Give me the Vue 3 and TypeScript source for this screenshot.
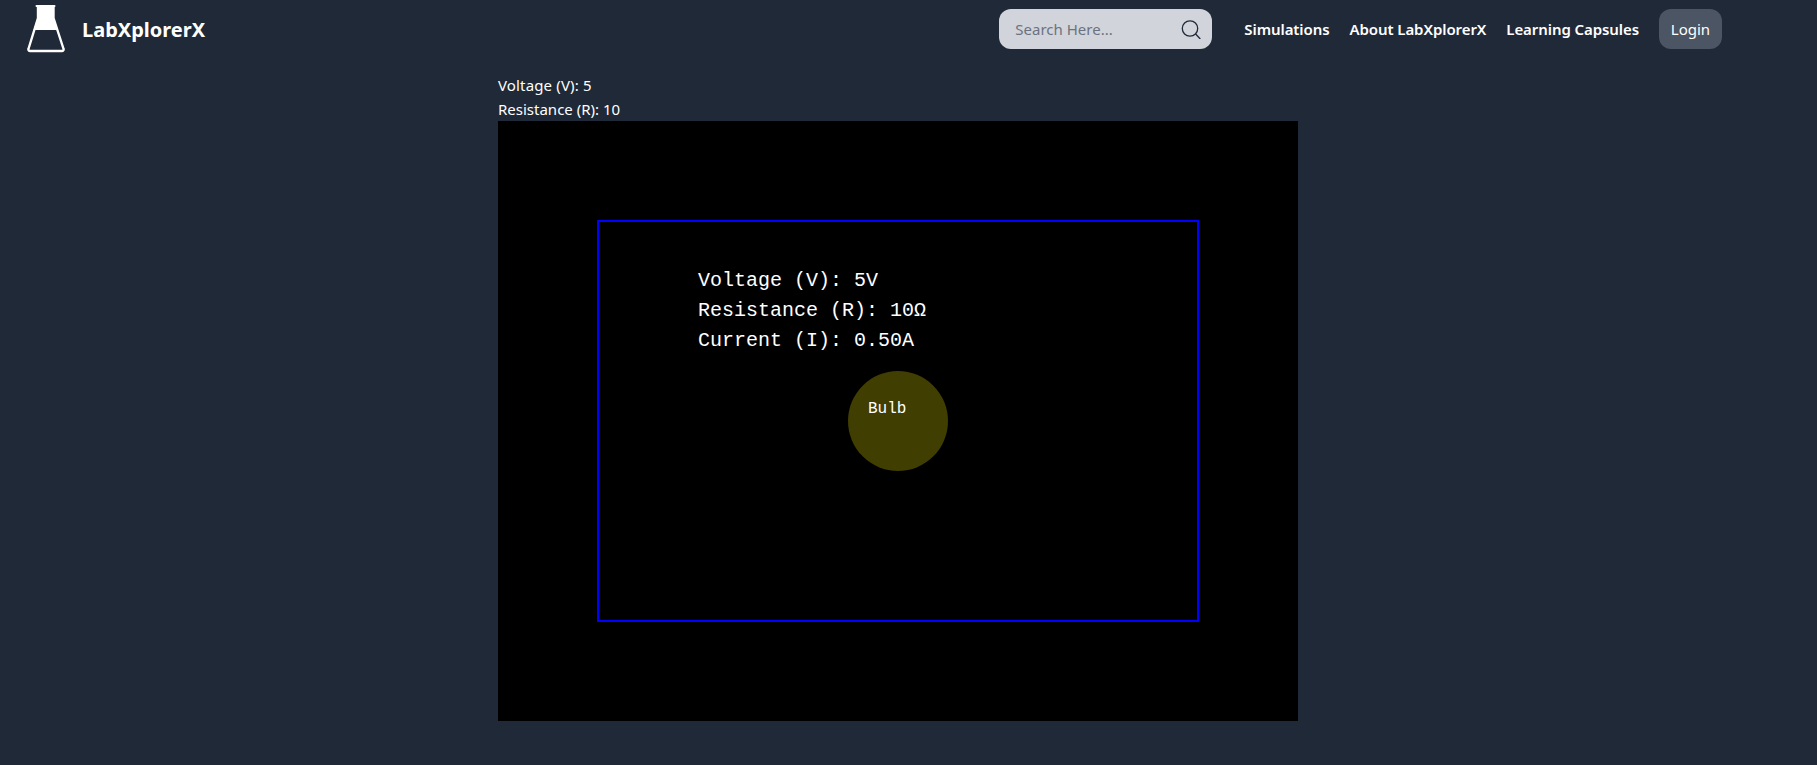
<script setup lang="ts">
const links = ["Simulations", "About LabXplorerX", "Learning Capsules"];
const voltage = 5;
const resistance = 10;
const current = (voltage / resistance).toFixed(2);
</script>

<template>
  <div class="page">
    <header class="navbar">
      <div class="brand">
        <svg class="flask" width="38" height="48" viewBox="0 0 38 48" fill="none">
          <path d="M9.5 1H27.5" stroke="#fff" stroke-width="2" stroke-linecap="round" />
          <path d="M11 1H26.5V13L31 25H6.5L11 13Z" fill="#fff" />
          <path
            d="M11 1V13L1.6 43.5C1 45 1.8 46 3.2 46H34.8C36.2 46 37 45 36.4 43.5L26.5 13V1"
            stroke="#fff"
            stroke-width="2.4"
            stroke-linejoin="round"
          />
        </svg>
        <span class="title">LabXplorerX</span>
      </div>
      <div class="nav-right">
        <div class="search">
          <span class="placeholder">Search Here...</span>
          <svg width="20" height="20" viewBox="0 0 20 20" fill="none" stroke="#1f2937" stroke-width="1.3">
            <circle cx="9" cy="9.5" r="7.7" />
            <path d="M14.6 15L19.3 20" />
          </svg>
        </div>
        <a v-for="link in links" :key="link" class="nav-link">{{ link }}</a>
        <button class="login">Login</button>
      </div>
    </header>
    <main class="content">
      <div class="label voltage">Voltage (V): {{ voltage }}</div>
      <div class="label">Resistance (R): {{ resistance }}</div>
      <svg class="stage" width="800" height="600" viewBox="0 0 800 600">
        <rect width="800" height="600" fill="#000" />
        <rect x="100" y="100" width="600" height="400" fill="none" stroke="#00f" stroke-width="2" />
        <text class="readout" x="200" y="165">Voltage (V): {{ voltage }}V</text>
        <text class="readout" x="200" y="195">Resistance (R): {{ resistance }}Ω</text>
        <text class="readout" x="200" y="225">Current (I): {{ current }}A</text>
        <circle cx="400" cy="300" r="50" fill="#403e00" />
        <text class="bulb" x="370" y="292">Bulb</text>
      </svg>
    </main>
  </div>
</template>

<style>
body {
  background: #1f2937;
}
</style>

<style scoped>
.page {
  min-height: 765px;
  color: #fff;
  font-family: "Noto Sans", "Open Sans", sans-serif;
}
.navbar {
  display: flex;
  justify-content: space-between;
  align-items: center;
  height: 58px;
  padding: 0 95px 0 27px;
}
.brand {
  display: flex;
  align-items: center;
  gap: 17px;
}
.title {
  font-size: 20px;
  font-weight: 700;
}
.nav-right {
  display: flex;
  align-items: center;
  gap: 20px;
}
.search {
  display: flex;
  align-items: center;
  justify-content: space-between;
  box-sizing: border-box;
  width: 213px;
  height: 40px;
  margin-right: 12px;
  padding: 0 11px 0 16px;
  border-radius: 12px;
  background: #d1d5db;
}
.placeholder {
  font-size: 15px;
  color: #6b7280;
}
.nav-link {
  font-size: 15px;
  font-weight: 600;
  letter-spacing: -0.08px;
}
.login {
  width: 63px;
  height: 40px;
  padding: 0;
  border: none;
  border-radius: 12px;
  background: #4b5563;
  color: #fff;
  font-family: inherit;
  font-size: 15px;
}
.content {
  padding: 15px 0 0 498px;
}
.label {
  font-size: 15px;
  line-height: 24px;
}
.voltage {
  letter-spacing: 0.15px;
}
.stage {
  display: block;
}
.readout {
  fill: #fff;
  font-family: "Liberation Mono", monospace;
  font-size: 20px;
}
.bulb {
  fill: #fff;
  font-family: "Liberation Mono", monospace;
  font-size: 16px;
}
</style>
